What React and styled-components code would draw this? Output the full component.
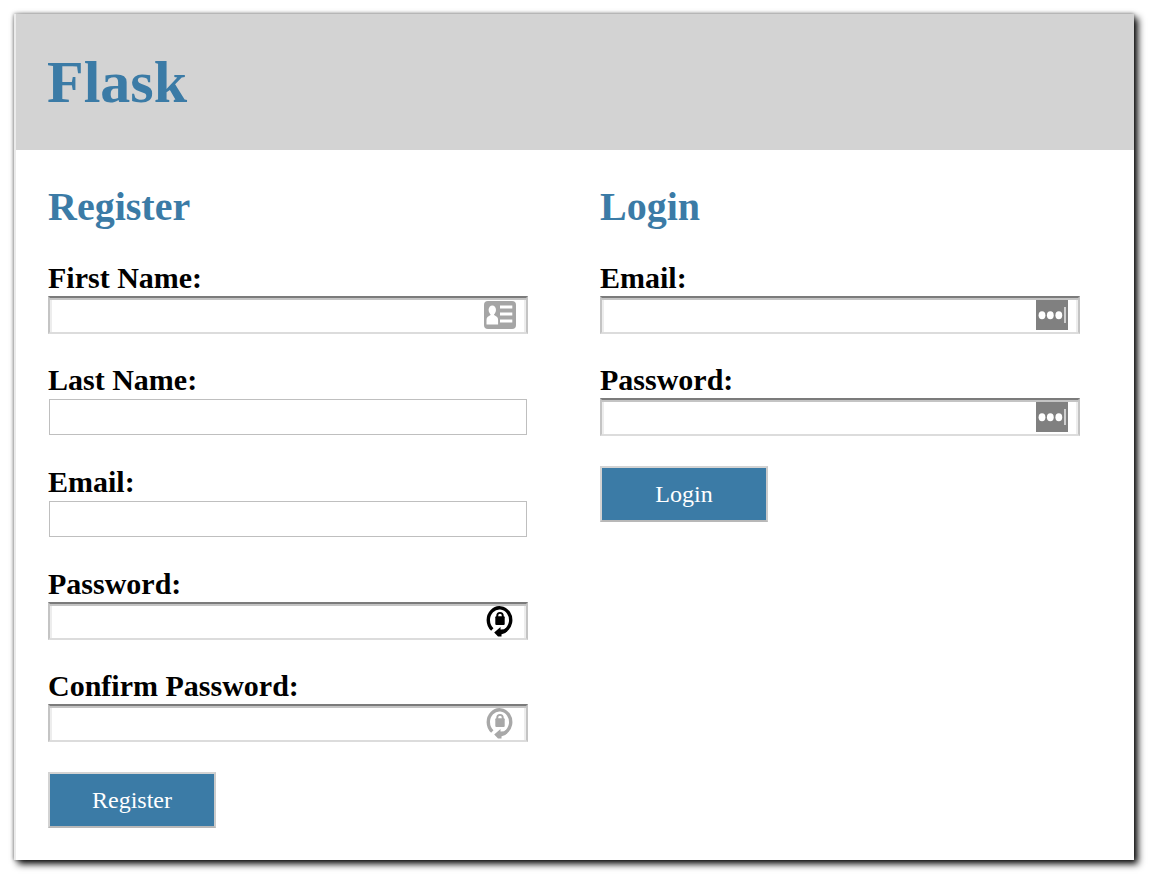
import React from "react";
import styled, { createGlobalStyle, css } from "styled-components";

const BLUE = "#3b7ba6";

const GlobalStyle = createGlobalStyle`
  *, *::before, *::after { box-sizing: border-box; }
  body {
    margin: 0;
    background: #fff;
    color: #000;
    font-family: "Liberation Serif", "Times New Roman", serif;
  }
`;

const Page = styled.div`
  padding: 14px 19px 19px 14px;
`;

const Panel = styled.div`
  background: #fff;
  border-left: 2px solid #ebebeb;
  box-shadow: 4px 4px 7px rgba(0, 0, 0, 0.95), 0 0 4px rgba(0, 0, 0, 0.5);
`;

const Header = styled.header`
  padding: 34px 31px;
  background: #d3d3d3;
`;

const Title = styled.h1`
  margin: 0;
  color: ${BLUE};
  font-size: 60px;
  line-height: 68px;
`;

const Columns = styled.main`
  display: grid;
  grid-template-columns: 1fr 1fr;
  column-gap: 72px;
  align-items: start;
  padding: 34px 54px 32px 32px;
`;

const Form = styled.form`
  display: flex;
  flex-direction: column;
  gap: 30px;
`;

const FormTitle = styled.h2`
  margin: 0;
  color: ${BLUE};
  font-size: 40px;
  line-height: 46px;
`;

const Field = styled.div`
  display: flex;
  flex-direction: column;
  gap: 2px;

  ${FormTitle} + & {
    margin-top: 2px;
  }
`;

const Label = styled.label`
  font-size: 30px;
  font-weight: bold;
  line-height: 32px;
`;

const InputFrame = styled.div`
  position: relative;
  display: flex;
  height: 38px;
  padding: ${(p) => (p.$plain ? "1px" : "0")};
`;

const Input = styled.input`
  flex: 1;
  min-width: 0;
  height: 100%;
  padding: 0 52px 0 8px;
  border-radius: 0;
  background: #fff;
  font-family: inherit;
  font-size: 24px;
  outline-color: ${BLUE};
  ${(p) =>
    p.$plain
      ? css`
          border: 1px solid #bfbfbf;
        `
      : css`
          border: 2px solid;
          border-color: #7b7b7b #c4c4c4 #dcdcdc;
          box-shadow: inset 0 2px #c4c4c4, inset 2px 0 #ededed, inset -2px 0 #ededed;
        `}
`;

const InputIcon = styled.svg`
  position: absolute;
  top: 4px;
  right: 12px;
  width: 32px;
  height: 32px;
  pointer-events: none;
`;

const Button = styled.button`
  align-self: flex-start;
  width: 168px;
  height: 56px;
  padding: 0;
  border: 2px solid;
  border-color: #d3d3d3 #cbcbcb #b8b8b8 #d3d3d3;
  border-radius: 0;
  background: ${BLUE};
  color: #fff;
  font-family: inherit;
  font-size: 24px;
  cursor: pointer;
`;

function ContactIcon() {
  return (
    <InputIcon viewBox="0 0 32 32" aria-hidden="true">
      <rect x="0" y="1" width="32" height="28" rx="4" fill="#a5a5a5" />
      <ellipse cx="8.300" cy="10" rx="3.700" ry="4.600" fill="#fff" />
      <path d="M6.500 12h3.600v3l3 2q1 1 1 3V24.500H2.500V20q0-2 1-3l3-2z" fill="#fff" />
      <path d="M16 7h12.300M16 14h12.300M16 21h12.300" stroke="#fff" strokeWidth="3" />
    </InputIcon>
  );
}

function GenerateIcon({ color }) {
  return (
    <InputIcon viewBox="0 0 32 32" aria-hidden="true">
      <path
        d="M8.300 23.500A11.200 12.300 0 1 1 21 24.800"
        fill="none"
        stroke={color}
        strokeWidth="3.400"
      />
      <path d="M10.200 26.400L16.500 21V23.600Q20 23.800 22.500 22L23.500 25Q21 28.300 17.500 28.200V30.500H14z" fill={color} />
      <rect x="11.300" y="10.300" width="9.400" height="8.700" rx="1" fill={color} />
      <path d="M13.200 11.500v-1.600a2.800 3 0 0 1 5.600 0v1.600" fill="none" stroke={color} strokeWidth="1.900" />
    </InputIcon>
  );
}

function PasswordIcon() {
  return (
    <InputIcon viewBox="0 0 32 32" aria-hidden="true">
      <rect width="32" height="30" fill="#808080" />
      <ellipse cx="6" cy="15.200" rx="3.400" ry="4" fill="#fff" />
      <ellipse cx="14.300" cy="15.200" rx="3.400" ry="4" fill="#fff" />
      <ellipse cx="22.800" cy="15.200" rx="3.400" ry="4" fill="#fff" />
      <path d="M29 7v16" stroke="#e4e4e4" strokeWidth="1.600" />
    </InputIcon>
  );
}

function TextField({ id, label, type = "text", icon }) {
  return (
    <Field>
      <Label htmlFor={id}>{label}</Label>
      <InputFrame $plain={!icon}>
        <Input id={id} name={id} type={type} $plain={!icon} />
        {icon}
      </InputFrame>
    </Field>
  );
}

export default function App() {
  return (
    <>
      <GlobalStyle />
      <Page>
        <Panel>
          <Header>
            <Title>Flask</Title>
          </Header>
          <Columns>
            <Form onSubmit={(e) => e.preventDefault()}>
              <FormTitle>Register</FormTitle>
              <TextField id="first-name" label="First Name:" icon={<ContactIcon />} />
              <TextField id="last-name" label="Last Name:" />
              <TextField id="email" label="Email:" type="email" />
              <TextField
                id="password"
                label="Password:"
                type="password"
                icon={<GenerateIcon color="#000" />}
              />
              <TextField
                id="confirm-password"
                label="Confirm Password:"
                type="password"
                icon={<GenerateIcon color="#a8a8a8" />}
              />
              <Button type="submit">Register</Button>
            </Form>
            <Form onSubmit={(e) => e.preventDefault()}>
              <FormTitle>Login</FormTitle>
              <TextField id="login-email" label="Email:" type="email" icon={<PasswordIcon />} />
              <TextField
                id="login-password"
                label="Password:"
                type="password"
                icon={<PasswordIcon />}
              />
              <Button type="submit">Login</Button>
            </Form>
          </Columns>
        </Panel>
      </Page>
    </>
  );
}
